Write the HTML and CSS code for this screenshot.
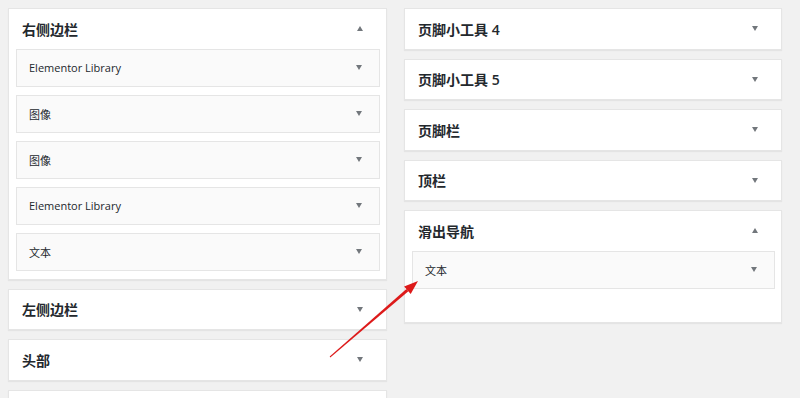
FILE: index.html
```html
<!DOCTYPE html>
<html lang="zh-CN">
<head>
  <meta charset="UTF-8">
  <meta name="viewport" content="width=device-width, initial-scale=1.0">
  <title>小工具</title>
  <link rel="stylesheet" href="styles.css">
</head>
<body>
  <div class="columns">
    <div class="column">
      <div class="panel open">
        <div class="panel-head">
          <h3>右侧边栏</h3>
          <span class="caret up"></span>
        </div>
        <div class="widgets">
          <div class="widget"><span>Elementor Library</span><span class="caret"></span></div>
          <div class="widget"><span>图像</span><span class="caret"></span></div>
          <div class="widget"><span>图像</span><span class="caret"></span></div>
          <div class="widget"><span>Elementor Library</span><span class="caret"></span></div>
          <div class="widget"><span>文本</span><span class="caret"></span></div>
        </div>
      </div>
      <div class="panel">
        <div class="panel-head"><h3>左侧边栏</h3><span class="caret"></span></div>
      </div>
      <div class="panel">
        <div class="panel-head"><h3>头部</h3><span class="caret"></span></div>
      </div>
      <div class="panel">
        <div class="panel-head"><h3>&nbsp;</h3><span class="caret"></span></div>
      </div>
    </div>

    <div class="column">
      <div class="panel">
        <div class="panel-head"><h3>页脚小工具 4</h3><span class="caret"></span></div>
      </div>
      <div class="panel">
        <div class="panel-head"><h3>页脚小工具 5</h3><span class="caret"></span></div>
      </div>
      <div class="panel">
        <div class="panel-head"><h3>页脚栏</h3><span class="caret"></span></div>
      </div>
      <div class="panel">
        <div class="panel-head"><h3>顶栏</h3><span class="caret"></span></div>
      </div>
      <div class="panel open">
        <div class="panel-head">
          <h3>滑出导航</h3>
          <span class="caret up"></span>
        </div>
        <div class="widgets tall">
          <div class="widget"><span>文本</span><span class="caret"></span></div>
        </div>
      </div>
    </div>
  </div>

  <!-- annotation arrow drawn over the screenshot -->
  <svg class="pointer" width="800" height="398" viewBox="0 0 800 398">
    <polygon points="329.7,356.6 330.3,357.4 408.4,291.3 406.4,289.0" fill="#dd1a1a"/>
    <polygon points="418,281 410.7,293.9 404.1,286.4" fill="#dd1a1a"/>
  </svg>
</body>
</html>
```

FILE: styles.css
```css
body {
  margin: 0;
  background: #f1f1f1;
  font-family: "Open Sans", "Noto Sans CJK SC", sans-serif;
  color: #23282d;
  overflow: hidden;
}

.columns {
  display: grid;
  grid-template-columns: 379px 378px;
  gap: 17px;
  padding: 8px 0 0 8px;
}

.panel {
  background: #fff;
  border: 1px solid #e5e5e5;
  box-shadow: 0 1px 1px rgba(0, 0, 0, 0.05);
  margin-bottom: 9px;
}

.panel-head {
  height: 39.5px;
  display: flex;
  align-items: center;
  justify-content: space-between;
  padding: 0 23px 0 13px;
}

.panel-head h3 {
  margin: 0;
  font-size: 14px;
  font-weight: 600;
}

.widgets {
  padding: 0 6px 0 7px;
}

.widgets.tall {
  padding-bottom: 25px;
}

.widget {
  height: 38px;
  box-sizing: border-box;
  background: #fafafa;
  border: 1px solid #e5e5e5;
  display: flex;
  align-items: center;
  justify-content: space-between;
  padding: 0 17px 0 12px;
  font-size: 11px;
  margin-bottom: 8px;
}

.caret {
  width: 0;
  height: 0;
  border-left: 3.5px solid transparent;
  border-right: 3.5px solid transparent;
  border-top: 5px solid #72777c;
}

.caret.up {
  border-top: 0;
  border-bottom: 5px solid #72777c;
}

.pointer {
  position: absolute;
  left: 0;
  top: 0;
  pointer-events: none;
}
```
